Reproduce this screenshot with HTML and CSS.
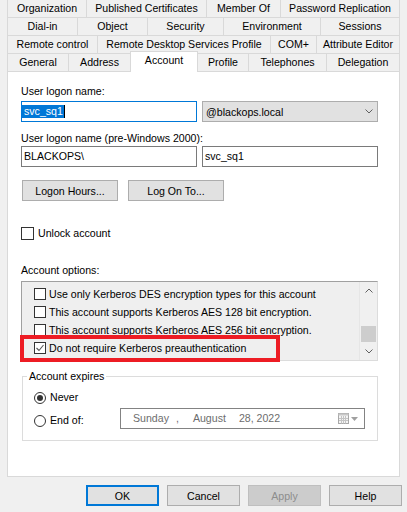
FILE: index.html
```html
<!DOCTYPE html>
<html>
<head>
<meta charset="utf-8">
<link rel="stylesheet" href="styles.css">
</head>
<body>
<div class="dialog">
  <div class="tabs">
    <div class="tabrow r1">
      <div class="tab">Organization</div>
      <div class="tab">Published Certificates</div>
      <div class="tab">Member Of</div>
      <div class="tab">Password Replication</div>
    </div>
    <div class="tabrow r2">
      <div class="tab">Dial-in</div>
      <div class="tab">Object</div>
      <div class="tab">Security</div>
      <div class="tab">Environment</div>
      <div class="tab">Sessions</div>
    </div>
    <div class="tabrow r3">
      <div class="tab">Remote control</div>
      <div class="tab">Remote Desktop Services Profile</div>
      <div class="tab">COM+</div>
      <div class="tab">Attribute Editor</div>
    </div>
    <div class="tabrow r4">
      <div class="tab">General</div>
      <div class="tab">Address</div>
      <div class="tab sel">Account</div>
      <div class="tab">Profile</div>
      <div class="tab">Telephones</div>
      <div class="tab">Delegation</div>
    </div>
  </div>

  <div class="panel">
    <div class="lbl l1">User logon name:</div>
    <div class="row r-upn">
      <div class="field focus"><span class="selection">svc_sq1</span><span class="caret"></span></div>
      <div class="combo"><span>@blackops.local</span>
        <svg class="chev" width="8" height="5" viewBox="0 0 8 5"><polyline points="0.5,0.5 4,4 7.5,0.5" fill="none" stroke="#606060" stroke-width="1"/></svg>
      </div>
    </div>
    <div class="lbl l2">User logon name (pre-Windows 2000):</div>
    <div class="row r-sam">
      <div class="field">BLACKOPS\</div>
      <div class="field">svc_sq1</div>
    </div>
    <div class="btnrow">
      <div class="btn">Logon Hours...</div>
      <div class="btn">Log On To...</div>
    </div>
    <div class="check unlock"><span class="cbox"></span><span>Unlock account</span></div>
    <div class="lbl l3">Account options:</div>
    <div class="listbox">
      <div class="items">
        <div class="opt"><span class="cbox small"></span><span>Use only Kerberos DES encryption types for this account</span></div>
        <div class="opt"><span class="cbox small"></span><span>This account supports Kerberos AES 128 bit encryption.</span></div>
        <div class="opt"><span class="cbox small"></span><span>This account supports Kerberos AES 256 bit encryption.</span></div>
        <div class="opt"><span class="cbox small"><svg width="10" height="10" viewBox="0 0 10 10"><polyline points="1.5,5 4,7.5 8.5,2" fill="none" stroke="#555" stroke-width="1.1"/></svg></span><span>Do not require Kerberos preauthentication</span></div>
      </div>
      <div class="scrollbar">
        <div class="sbbtn"><svg width="8" height="5" viewBox="0 0 8 5"><polyline points="0.5,4.5 4,1 7.5,4.5" fill="none" stroke="#606060" stroke-width="1"/></svg></div>
        <div class="track"><div class="thumb"></div></div>
        <div class="sbbtn"><svg width="8" height="5" viewBox="0 0 8 5"><polyline points="0.5,0.5 4,4 7.5,0.5" fill="none" stroke="#606060" stroke-width="1"/></svg></div>
      </div>
      <div class="highlight"></div>
    </div>
    <fieldset class="expires">
      <legend>Account expires</legend>
      <div class="radio-row first"><span class="radio on"></span><span>Never</span></div>
      <div class="radio-row second">
        <div class="radio-label"><span class="radio"></span><span>End of:</span></div>
        <div class="datebox">
          <span class="d-day">Sunday</span><span class="d-comma">,</span><span class="d-month">August</span><span class="d-date">28, 2022</span>
          <svg class="cal" width="11" height="11" viewBox="0 0 11 11">
            <rect x="0.5" y="0.5" width="10" height="10" fill="#f4f4f4" stroke="#a8a8a8"/>
            <rect x="0.5" y="0.5" width="10" height="2" fill="#c8c8c8"/>
            <path d="M3.5 3v7.5M5.5 3v7.5M7.5 3v7.5M1 5.5h9M1 7.5h9" stroke="#c4c4c4" stroke-width="1"/>
          </svg>
          <svg class="dd" width="7" height="4" viewBox="0 0 7 4"><polygon points="0,0 7,0 3.5,4" fill="#a0a0a0"/></svg>
        </div>
      </div>
    </fieldset>
  </div>

  <div class="actions">
    <div class="btn dlg default">OK</div>
    <div class="btn dlg">Cancel</div>
    <div class="btn dlg disabled">Apply</div>
    <div class="btn dlg">Help</div>
  </div>
</div>
</body>
</html>
```

FILE: styles.css
```css
html, body {
  margin: 0;
  background: #f0f0f0;
}
body {
  width: 407px;
  height: 512px;
  overflow: hidden;
  font-family: "Liberation Sans", Arial, sans-serif;
  font-size: 10.6px;
  color: #000;
}
.dialog {
  padding: 0 7px;
}

/* tabs */
.tabrow {
  display: grid;
}
.r1 { grid-template-columns: 79px 120px 74px 120px; }
.r2 { grid-template-columns: 70px 70px 76px 97px 80px; }
.r3 { grid-template-columns: 90px 173px 46px 84px; }
.r4 { grid-template-columns: 61px 62px 67px 51px 78px 74px; }
.tab {
  box-sizing: border-box;
  height: 18px;
  line-height: 17px;
  border-left: 1px solid #d9d9d9;
  border-top: 1px solid #d9d9d9;
  text-align: center;
  white-space: nowrap;
  overflow: hidden;
  background: #f0f0f0;
}
.tab:last-child {
  border-right: 1px solid #d9d9d9;
}
.r1 .tab {
  border-top: none;
  height: 17px;
}
.tab.sel {
  background: #fff;
  height: 21px;
  margin-top: -2px;
  margin-bottom: -1px;
  margin-right: -1px;
  border-right: 1px solid #d9d9d9;
  position: relative;
  z-index: 1;
}

/* panel */
.panel {
  box-sizing: border-box;
  height: 406px;
  border: 1px solid #d9d9d9;
  background: #fff;
  padding: 0 21px 0 13px;
}
.lbl {
  height: 12px;
  line-height: 12px;
  white-space: nowrap;
}
.l1 { margin-top: 13px; }
.l2 { margin-top: 10px; }
.l3 { margin-top: 24px; }
.row {
  display: flex;
  gap: 5px;
}
.r-upn { margin-top: 4px; }
.r-sam { margin-top: 2px; }
.field {
  box-sizing: border-box;
  width: 176px;
  height: 21px;
  border: 1px solid #7a7a7a;
  padding-left: 2px;
  line-height: 19px;
  white-space: nowrap;
  display: flex;
  align-items: center;
}
.field.focus {
  border-color: #0078d7;
  padding-left: 0;
}
.selection {
  background: #0078d7;
  color: #fff;
  height: 13px;
  line-height: 13px;
  padding: 0 1px 0 2px;
}
.caret {
  width: 1px;
  height: 13px;
  background: #000;
}
.combo {
  box-sizing: border-box;
  width: 176px;
  height: 21px;
  background: #e1e1e1;
  border: 1px solid #adadad;
  display: flex;
  align-items: center;
  justify-content: space-between;
  padding: 0 4px 0 3px;
}
.btnrow {
  display: flex;
  gap: 10px;
  margin-top: 13px;
  padding-left: 1px;
}
.btn {
  box-sizing: border-box;
  width: 96px;
  height: 21px;
  background: #e1e1e1;
  border: 1px solid #adadad;
  display: flex;
  align-items: center;
  justify-content: center;
  white-space: nowrap;
}
.check {
  display: flex;
  align-items: center;
  height: 13px;
  line-height: 13px;
  gap: 4px;
}
.unlock { margin-top: 26px; }
.cbox {
  box-sizing: border-box;
  width: 13px;
  height: 13px;
  border: 1px solid #333;
  background: #fff;
  flex: none;
  display: flex;
  align-items: center;
  justify-content: center;
}
.cbox.small {
  width: 12px;
  height: 12px;
}

/* list */
.listbox {
  position: relative;
  box-sizing: border-box;
  margin-top: 5px;
  height: 80px;
  border: 1px solid;
  border-color: #a0a0a0 #dcdcdc #dcdcdc #a0a0a0;
  background: #efefef;
  display: flex;
}
.items {
  flex: 1;
  padding: 3px 0 0 12px;
  overflow: hidden;
}
.opt {
  display: flex;
  align-items: center;
  gap: 3px;
  height: 18px;
  line-height: 18px;
  white-space: nowrap;
}
.scrollbar {
  width: 17px;
  border-left: 1px solid #e6e6e6;
  background: #f0f0f0;
  display: flex;
  flex-direction: column;
}
.sbbtn {
  height: 17px;
  display: flex;
  align-items: center;
  justify-content: center;
}
.track {
  flex: 1;
  padding-top: 27px;
}
.thumb {
  height: 16px;
  margin: 0 1px;
  background: #cdcdcd;
}
.highlight {
  position: absolute;
  left: -2px;
  top: 53px;
  width: 260px;
  height: 27px;
  box-sizing: border-box;
  border: 4px solid #ed1c24;
}

/* fieldset */
.expires {
  box-sizing: border-box;
  width: 356px;
  margin: 9px 0 0 1px;
  padding: 0 0 11px 11px;
  border: 1px solid #dcdcdc;
  min-inline-size: auto;
}
.expires legend {
  padding: 0 2px;
  margin-left: -7px;
  line-height: 12px;
  height: 12px;
}
.radio-row {
  display: flex;
  white-space: nowrap;
}
.radio-row.first {
  margin-top: 9px;
  height: 13px;
  line-height: 13px;
  align-items: center;
  gap: 4px;
}
.radio-row.second {
  margin-top: 4px;
  height: 21px;
  align-items: flex-start;
}
.radio-label {
  width: 86px;
  margin-top: 6px;
  height: 13px;
  line-height: 13px;
  display: flex;
  align-items: center;
  gap: 4px;
}
.radio {
  box-sizing: border-box;
  width: 12px;
  height: 12px;
  border: 1px solid #333;
  border-radius: 50%;
  background: #fff;
  flex: none;
  display: flex;
  align-items: center;
  justify-content: center;
}
.radio.on::after {
  content: "";
  width: 6px;
  height: 6px;
  border-radius: 50%;
  background: #333;
}
.datebox {
  box-sizing: border-box;
  width: 245px;
  height: 21px;
  border: 1px solid #838383;
  background: #fff;
  color: #6d6d6d;
  line-height: 19px;
  display: flex;
  align-items: center;
  padding-left: 12px;
  white-space: nowrap;
}
.d-comma { margin-left: 7px; }
.d-month { margin-left: 14px; }
.d-date { margin-left: 13px; }
.cal { margin-left: auto; margin-right: 2px; }
.dd { margin-right: 6px; }

/* dialog buttons */
.actions {
  display: flex;
  justify-content: flex-end;
  gap: 8px;
  margin-top: 8px;
  margin-right: -2px;
}
.btn.dlg {
  width: 73px;
}
.btn.default {
  border: 2px solid #0078d7;
}
.btn.disabled {
  background: #cccccc;
  border-color: #bfbfbf;
  color: #8d8d8d;
}
```
